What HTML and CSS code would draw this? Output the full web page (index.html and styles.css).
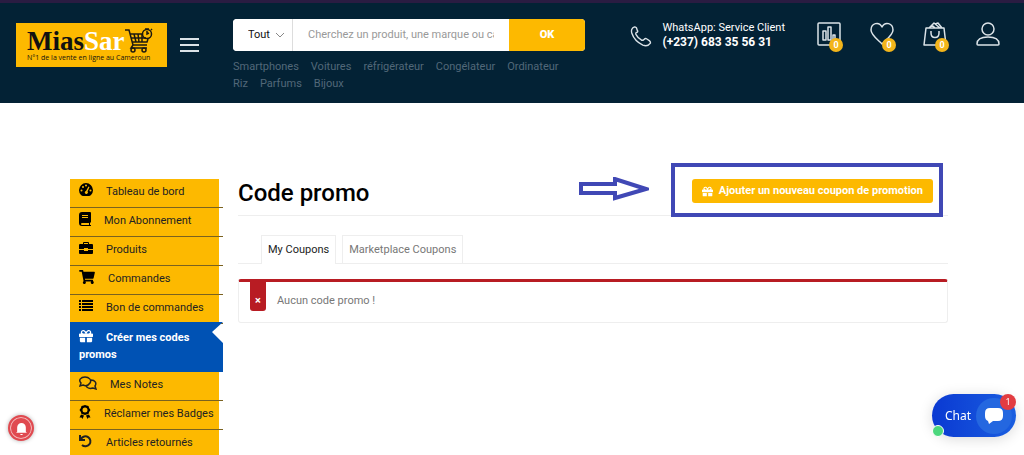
FILE: index.html
```html
<!DOCTYPE html>
<html lang="fr">
<head>
    <meta charset="UTF-8">
    <meta name="viewport" content="width=device-width, initial-scale=1.0">
    <title>Code promo - MiasSar</title>
    <link rel="stylesheet" href="styles.css">
</head>
<body>
    <svg class="sprite" aria-hidden="true">
        <symbol id="gift" viewBox="0 0 512 512">
            <path d="M32 448c0 17.7 14.3 32 32 32h160V320H32v128zm256 32h160c17.7 0 32-14.3 32-32V320H288v160zm192-320h-42.1c6.2-12.1 10.1-25.5 10.1-40 0-48.5-39.5-88-88-88-41.6 0-68.5 21.3-103 68.3-34.5-47-61.4-68.3-103-68.3-48.5 0-88 39.5-88 88 0 14.5 3.8 27.9 10.1 40H32c-17.7 0-32 14.3-32 32v80c0 8.8 7.2 16 16 16h480c8.8 0 16-7.2 16-16v-80c0-17.7-14.3-32-32-32zm-326.1 0c-22.1 0-40-17.9-40-40s17.9-40 40-40c19.9 0 34.6 3.3 86.1 80h-86.1zm206.1 0h-86.1c51.4-76.5 65.7-80 86.1-80 22.1 0 40 17.9 40 40s-17.9 40-40 40z"/>
        </symbol>
    </svg>

    <header class="header">
        <a href="#" class="logo">
            <span class="logo-name">Mias<span>Sar</span></span>
            <span class="logo-tagline">N°1 de la vente en ligne au Cameroun</span>
            <svg class="logo-cart" viewBox="0 0 28 25" fill="none" stroke="#1d1a10" stroke-width="1.5">
                <path d="M0 2h4l4 15h14M5 6h13M6 10h15M7 14h15l1-3M9 6l2 8M13 6l1 8M17 6v8M8 17l-2 3h16"/>
                <circle cx="8" cy="22" r="2"/>
                <circle cx="19" cy="22" r="2"/>
                <circle cx="22" cy="6" r="4.5"/>
                <path d="M22 3v3l2-1M20 1h4M26 1l1 1"/>
            </svg>
        </a>
        <button class="menu-btn" aria-label="Menu"><span></span><span></span><span></span></button>

        <div class="search">
            <form class="search-form">
                <select class="search-cat" aria-label="Catégorie">
                    <option>Tout</option>
                </select>
                <input type="text" class="search-input" aria-label="Recherche" placeholder="Cherchez un produit, une marque ou catégorie">
                <button type="button" class="search-btn">OK</button>
            </form>
            <nav class="tags">
                <a href="#">Smartphones</a>
                <a href="#">Voitures</a>
                <a href="#">réfrigérateur</a>
                <a href="#">Congélateur</a>
                <a href="#">Ordinateur</a>
                <a href="#">Riz</a>
                <a href="#">Parfums</a>
                <a href="#">Bijoux</a>
            </nav>
        </div>

        <div class="contact">
            <svg class="contact-icon" viewBox="0 0 24 24">
                <path d="M5 2C2 3 1 6 2 9c2 6 6 10 12 13 3 1 6 1 8-2 1-1 0-2-1-3l-3-2c-1-1-2 0-3 1s-2 1-3 0c-2-1-4-3-5-5-1-1-1-2 0-3 1 0 2-1 1-2L7 3C6 2 6 2 5 2z"/>
            </svg>
            <div>
                <p>WhatsApp: Service Client</p>
                <p class="phone">(+237) 683 35 56 31</p>
            </div>
        </div>

        <nav class="actions">
            <a href="#" aria-label="Comparer">
                <svg viewBox="0 0 24 24"><path d="M2 1h20q1 0 1 1v20q0 1-1 1H2q-1 0-1-1V2q0-1 1-1zM6 18V9h3v9zM11 18V5h3v13zM16 18v-5h2v5z"/></svg>
                <span class="badge">0</span>
            </a>
            <a href="#" aria-label="Favoris">
                <svg viewBox="0 0 24 24"><path d="M12 22C8 18 1 13 1 8c0-7 8-9 11-3 3-6 11-4 11 3 0 5-7 10-11 14z"/></svg>
                <span class="badge">0</span>
            </a>
            <a href="#" aria-label="Panier">
                <svg viewBox="0 0 24 24"><path d="M3 6h18l2 17H1zM8 9v2c0 6 8 6 8 0V9M6 6l5-5 6 5M9 3l3 3M12 2l3-1 4 5"/></svg>
                <span class="badge">0</span>
            </a>
            <a href="#" aria-label="Mon compte">
                <svg viewBox="0 0 24 24"><circle cx="12" cy="7" r="6"/><path d="M1 22c0-5 5-7 11-7s11 2 11 7q0 1-1 1H2q-1 0-1-1z"/></svg>
            </a>
        </nav>
    </header>

    <main class="page">
        <ul class="sidebar">
            <li><a href="#">
                <svg viewBox="0 0 14 14"><path fill-rule="evenodd" d="M2 12a7 7 0 1 1 10 0q-1 1-2 1H4q-1 0-2-1zM6 2.5a1 1 0 1 0 2 0a1 1 0 1 0-2 0M3 4a1 1 0 1 0 2 0a1 1 0 1 0-2 0M1.500 7.500a1 1 0 1 0 2 0a1 1 0 1 0-2 0M10.500 7.500a1 1 0 1 0 2 0a1 1 0 1 0-2 0M9.500 3.500L7 8a1.500 1.500 0 1 0 1.500.500L10.500 4z"/></svg>Tableau de bord
            </a></li>
            <li><a href="#">
                <svg class="w12" viewBox="0 0 12 14"><path fill-rule="evenodd" d="M3 0h8q1 0 1 1v9l-1 1v2h1v1H3q-3 0-3-3V3q0-3 3-3zM3 11q-1 0-1 1t1 1h7v-2zM3 3v1h6V3zM3 5v1h6V5z"/></svg>Mon Abonnement
            </a></li>
            <li><a href="#">
                <svg viewBox="0 0 14 14"><path fill-rule="evenodd" d="M4 3V2q0-1 1-1h4q1 0 1 1v1h3q1 0 1 1v4H9V7H5v1H0V4q0-1 1-1zM5 3h4V2H5zM0 9h5v1h4V9h5v3q0 1-1 1H1q-1 0-1-1z"/></svg>Produits
            </a></li>
            <li><a href="#">
                <svg class="w16" viewBox="0 0 576 512"><path d="M528.12 301.319l47.273-208C578.806 78.301 567.391 64 551.99 64H159.208l-9.166-44.81C147.758 8.021 137.93 0 126.529 0H24C10.745 0 0 10.745 0 24v16c0 13.255 10.745 24 24 24h69.883l70.248 343.435C147.325 417.1 136 435.222 136 456c0 30.928 25.072 56 56 56s56-25.072 56-56c0-15.674-6.447-29.835-16.824-40h209.647C430.447 426.165 424 440.326 424 456c0 30.928 25.072 56 56 56s56-25.072 56-56c0-22.172-12.888-41.332-31.579-50.405l5.517-24.276c3.413-15.018-8.002-29.319-23.403-29.319H218.117l-6.545-32h293.145c11.206 0 20.92-7.754 23.403-18.681z"/></svg>Commandes
            </a></li>
            <li><a href="#">
                <svg viewBox="0 0 14 14"><path d="M0 1h2v2H0zM3 1h11v2H3zM0 4h2v2H0zM3 4h11v2H3zM0 7h2v2H0zM3 7h11v2H3zM0 10h2v2H0zM3 10h11v2H3z"/></svg>Bon de commandes
            </a></li>
            <li class="active"><a href="#">
                <svg><use href="#gift"/></svg>Créer mes codes promos
            </a></li>
            <li><a href="#">
                <svg class="w18 outline" viewBox="0 0 18 14"><path d="M1 10l1-3C-1 4 2 1 6 1s7 3 5 6-5 3-7 2zM12 4c4 0 6 3 4 6l1 3-3-1c-3 1-6 0-7-2"/></svg>Mes Notes
            </a></li>
            <li><a href="#">
                <svg class="w12" viewBox="0 0 11 14"><path fill-rule="evenodd" d="M5.500 0L7 .6l2 .4.6 2L11 5 9.600 7 9 9l-2 .4-1.500.6L4 9.400 2 9l-.6-2L0 5l1.400-2L2 1l2-.4zM5.500 2.500a2.500 2.500 0 1 0 0 5a2.500 2.500 0 1 0 0-5zM1.500 9.600l3 1-1.500 3.400-1-1.500H0zM9.500 9.600l-3 1L8 14l1-1.500h2z"/></svg>Réclamer mes Badges
            </a></li>
            <li><a href="#">
                <svg class="outline bold" viewBox="0 0 14 14"><path d="M1 1v5h5M2 5a5 5 0 1 1 1 6"/></svg>Articles retournés
            </a></li>
        </ul>

        <section class="content">
            <div class="content-head">
                <h1>Code promo</h1>
                <svg class="arrow" viewBox="0 0 70 24"><path d="M2 7h34V2l31 10-31 9v-5H2z"/></svg>
                <div class="highlight">
                    <button class="add-btn"><svg><use href="#gift"/></svg>Ajouter un nouveau coupon de promotion</button>
                </div>
            </div>

            <nav class="tabs">
                <a href="#" class="tab current">My Coupons</a>
                <a href="#" class="tab">Marketplace Coupons</a>
            </nav>

            <div class="notice">
                <span class="notice-mark">×</span>
                <p>Aucun code promo !</p>
            </div>
        </section>
    </main>

    <button class="bell" aria-label="Notifications">
        <svg viewBox="0 0 12 12"><path d="M2 9V5a4 4 0 0 1 8 0v4l1 1H1zM5 11h2v1H5z"/></svg>
    </button>

    <button class="chat">
        <span>Chat</span>
        <span class="chat-icon">
            <svg viewBox="0 0 20 18"><path d="M6 1h8q5 0 5 5v3q0 5-5 5H9l-4 3-1-3Q1 13 1 9V6q0-5 5-5z"/></svg>
        </span>
        <span class="chat-count">1</span>
        <span class="chat-status"></span>
    </button>
</body>
</html>
```
FILE: styles.css
```css
* {
    margin: 0;
    padding: 0;
    box-sizing: border-box;
}
body {
    background: white;
    color: #222;
    font-family: Roboto, Arial, sans-serif;
    font-size: 11px;
    line-height: 16px;
    height: 100vh;
    overflow: hidden;
}
a {
    color: inherit;
    text-decoration: none;
}
button, input, select {
    font: inherit;
    border: none;
}
button {
    cursor: pointer;
}
.sprite {
    position: absolute;
    width: 0;
    height: 0;
}

/* Header */
.header {
    display: flex;
    align-items: flex-start;
    min-height: 103px;
    padding: 16px 24px 11px 16px;
    background: #032235;
    border-top: 3px solid #2a1c42;
    color: white;
}
.logo {
    position: relative;
    width: 151px;
    height: 44px;
    margin-top: 4px;
    padding: 6px 11px 4px;
    background: #fdb900;
    color: #111;
}
.logo-name {
    display: block;
    font-family: "Liberation Serif", serif;
    font-size: 27px;
    font-weight: bold;
    line-height: 25px;
}
.logo-name span {
    color: white;
}
.logo-tagline {
    display: block;
    font-family: "Open Sans", sans-serif;
    font-size: 7px;
    line-height: 8px;
    white-space: nowrap;
}
.logo-cart {
    position: absolute;
    top: 5px;
    right: 14px;
    width: 28px;
    height: 25px;
}
.menu-btn {
    display: flex;
    flex-direction: column;
    gap: 4px;
    width: 19px;
    margin: 19px 34px 0 13px;
    background: none;
}
.menu-btn span {
    height: 2px;
    background: #dbe3e8;
}
.search {
    flex: 1;
    max-width: 352px;
}
.search-form {
    display: flex;
    height: 32px;
    border-radius: 4px;
    overflow: hidden;
    background: white;
}
.search-cat {
    width: 60px;
    padding-left: 15px;
    appearance: none;
    border-right: 1px solid #ddd;
    color: #111;
    background: white url("data:image/svg+xml,%3Csvg xmlns='http://www.w3.org/2000/svg' viewBox='0 0 8 5' fill='none' stroke='%23888'%3E%3Cpath d='M0 0l4 4 4-4'/%3E%3C/svg%3E") no-repeat right 8px center / 8px 5px;
}
.search-input {
    flex: 1;
    min-width: 0;
    padding: 0 15px;
    outline: none;
}
.search-input::placeholder {
    color: #999;
}
.search-btn {
    width: 76px;
    background: #fdb900;
    color: white;
    font-weight: 900;
}
.tags {
    display: flex;
    flex-wrap: wrap;
    gap: 1px 12px;
    margin-top: 8px;
    color: #526879;
}
.contact {
    display: flex;
    gap: 10px;
    margin-left: auto;
    white-space: nowrap;
}
.contact p {
    line-height: 15px;
}
.contact p:first-child {
    margin-top: 1px;
}
.contact p.phone {
    font-size: 12px;
    font-weight: bold;
}
.contact-icon {
    width: 22px;
    height: 22px;
    margin-top: 6px;
}
.contact-icon, .actions svg {
    fill: none;
    stroke: #dbe3e8;
    stroke-width: 1.5;
    stroke-linejoin: round;
}
.actions {
    display: flex;
    gap: 29px;
    margin: 3px 0 0 32px;
}
.actions a {
    position: relative;
    height: 24px;
}
.actions svg {
    width: 24px;
    height: 24px;
}
.badge {
    position: absolute;
    top: 16px;
    right: -2px;
    width: 14px;
    height: 14px;
    border-radius: 50%;
    background: #f3b51b;
    font-size: 9px;
    font-weight: bold;
    line-height: 14px;
    text-align: center;
}

/* Page */
.page {
    display: flex;
    gap: 15px;
    padding: 76px 76px 0 70px;
}
.sidebar {
    width: 153px;
    list-style: none;
}
.sidebar li {
    border-bottom: 1px solid #7a6220;
}
.sidebar a {
    display: block;
    margin-right: 4px;
    padding: 4px 0 7px 9px;
    background: #fdb900;
}
.sidebar svg {
    width: 14px;
    height: 14px;
    margin-right: 13px;
    vertical-align: -2px;
}
.sidebar .w12 {
    width: 12px;
}
.sidebar .w16 {
    width: 16px;
}
.sidebar .w18 {
    width: 18px;
}
.sidebar .outline {
    fill: none;
    stroke: #222;
    stroke-width: 1.5;
}
.sidebar .bold {
    stroke-width: 2;
}
.sidebar .active {
    margin-top: -2px;
    border-bottom: none;
}
.sidebar .active a {
    margin-right: 0;
    padding: 7px 20px 9px 9px;
    background: #0052b4;
    color: white;
    fill: white;
    font-weight: bold;
    line-height: 17px;
    clip-path: polygon(0 0, 100% 0, calc(100% - 11px) 10px, 100% 21px, 100% 100%, 0 100%);
}
.content {
    flex: 1;
}
.content-head {
    display: flex;
    align-items: flex-start;
    height: 37px;
    border-bottom: 1px solid #eee;
}
h1 {
    color: #000;
    font-size: 24px;
    font-weight: 500;
    line-height: 28px;
}
.arrow {
    width: 70px;
    height: 24px;
    margin: -2px 43px 0 auto;
    fill: none;
    stroke: #4048b5;
    stroke-width: 4;
}
.highlight {
    position: relative;
    margin-right: 15px;
}
.highlight::before {
    content: "";
    position: absolute;
    inset: -16px -10px -14px -21px;
    border: 4px solid #4048b5;
    pointer-events: none;
}
.add-btn {
    display: flex;
    align-items: center;
    gap: 6px;
    height: 24px;
    padding: 0 10px;
    border-radius: 3px;
    background: #fdb900;
    color: white;
    font-weight: bold;
}
.add-btn svg {
    width: 11px;
    height: 11px;
    fill: white;
}
.tabs {
    display: flex;
    gap: 6px;
    margin-top: 19px;
    padding-left: 23px;
    border-bottom: 1px solid #eee;
}
.tab {
    padding: 6px 6px 5px;
    border: 1px solid #eee;
    border-bottom: none;
    color: #777;
}
.tab.current {
    margin-bottom: -1px;
    background: white;
    color: #222;
}
.notice {
    display: flex;
    gap: 11px;
    height: 44px;
    margin-top: 15px;
    padding-left: 11px;
    border: 1px solid #eee;
    border-top: 3px solid #b81c23;
    border-radius: 3px;
    color: #777;
}
.notice-mark {
    width: 16px;
    height: 29px;
    padding-top: 11px;
    border-radius: 0 0 3px 3px;
    background: #b81c23;
    color: white;
    font-weight: bold;
    text-align: center;
}
.notice p {
    padding-top: 11px;
}

/* Floating buttons */
.bell {
    position: fixed;
    left: 8px;
    bottom: 14px;
    display: grid;
    place-items: center;
    width: 26px;
    height: 26px;
    border: 2px solid #e04a50;
    border-radius: 50%;
    background: #e04a50;
    box-shadow: inset 0 0 0 1px #f3b6b8, 0 0 4px rgba(0, 0, 0, 0.3);
}
.bell svg {
    width: 13px;
    height: 13px;
    fill: white;
}
.chat {
    position: fixed;
    right: 8px;
    bottom: 18px;
    display: flex;
    align-items: center;
    justify-content: space-between;
    width: 84px;
    height: 43px;
    padding: 0 4px 0 13px;
    border-radius: 22px;
    background: linear-gradient(90deg, #0a39d2, #1a5ee0);
    box-shadow: 0 2px 14px rgba(0, 0, 0, 0.15);
    color: white;
    font-family: "Noto Sans", sans-serif;
    font-size: 12px;
}
.chat-icon {
    display: grid;
    place-items: center;
    width: 36px;
    height: 36px;
    border-radius: 50%;
    background: #2467e0;
}
.chat-icon svg {
    width: 20px;
    height: 18px;
    fill: white;
}
.chat-count {
    position: absolute;
    top: 0;
    right: 0;
    width: 16px;
    height: 16px;
    border-radius: 50%;
    background: #e23c41;
    font-size: 9px;
    line-height: 16px;
}
.chat-status {
    position: absolute;
    left: 0;
    bottom: 0;
    width: 12px;
    height: 12px;
    border: 1px solid white;
    border-radius: 50%;
    background: #4cd77d;
}
```
